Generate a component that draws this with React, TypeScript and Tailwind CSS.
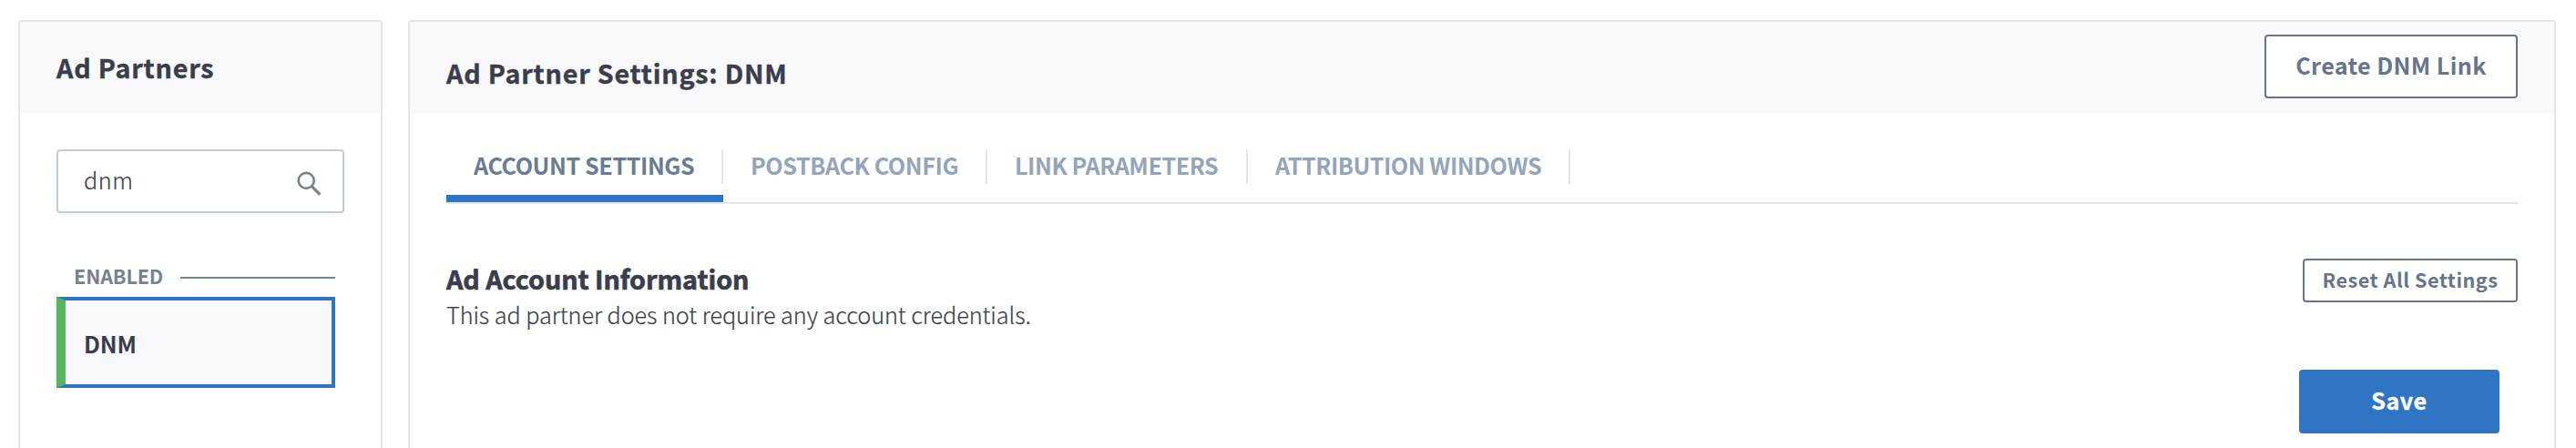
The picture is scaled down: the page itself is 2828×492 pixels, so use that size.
import type { ReactNode } from "react";

const tabs = [
  { label: "ACCOUNT SETTINGS", width: "w-[304px]", tracking: "tracking-[-0.4px]", active: true },
  { label: "POSTBACK CONFIG", width: "w-[290px]", tracking: "tracking-[-0.4px]", active: false },
  { label: "LINK PARAMETERS", width: "w-[286px]", tracking: "tracking-[-0.42px]", active: false },
  { label: "ATTRIBUTION WINDOWS", width: "w-[354px]", tracking: "tracking-[-0.46px]", active: false },
];

function Panel({ className, children }: { className: string; children: ReactNode }) {
  return (
    <section className={`flex flex-col rounded-t-[4px] border-2 border-b-0 border-[#e1e6ea] ${className}`}>
      {children}
    </section>
  );
}

function SearchIcon() {
  return (
    <svg width="28" height="28" viewBox="0 0 28 28" fill="none" stroke="#76828f" className="mt-1.5 shrink-0">
      <circle cx="10.2" cy="10.4" r="8.5" strokeWidth="2.6" />
      <path d="M16.2 16.6 L25.4 25.6" strokeWidth="3.2" />
    </svg>
  );
}

function PartnerList() {
  return (
    <Panel className="w-[400px] shrink-0">
      <header className="h-[100px] bg-[#f9f9fb] pl-10 pt-[29px]">
        <h2 className="text-[28.7px] font-bold leading-[41px] tracking-[0.8px] text-[#3b3e4a] [-webkit-text-stroke:0.4px]">
          Ad Partners
        </h2>
      </header>
      <div className="pl-10 pt-10">
        <div className="flex h-[70px] w-[316px] items-center justify-between rounded-[4px] border-2 border-[#c2cdd8] pl-7 pr-[22px]">
          <span className="-mt-1 text-[25.15px] font-light leading-9 tracking-[0.6px] text-[#3b3e4a] [-webkit-text-stroke:0.2px]">
            dnm
          </span>
          <SearchIcon />
        </div>
        <div className="mt-[55px] flex h-8 w-[306px] items-center pl-[19px]">
          <span className="-mt-[5px] w-[117px] text-[21.6px] font-bold leading-[31px] tracking-[-0.15px] text-[#76828f]">
            ENABLED
          </span>
          <span className="h-0.5 flex-1 bg-[#76828f]" />
        </div>
        <div className="mt-[5px] flex h-[100px] w-[306px] items-center border-4 border-l-[10px] border-[#3074c4] border-l-[#59b660] bg-[#f7f9fd] pl-5">
          <span className="mt-0.5 text-[25.15px] font-bold leading-9 tracking-[-0.2px] text-[#3b3e4a]">DNM</span>
        </div>
      </div>
    </Panel>
  );
}

function Tabs() {
  return (
    <nav className="flex h-[60px] border-b-2 border-[#e1e6ea]">
      {tabs.map((tab) => (
        <div
          key={tab.label}
          className={`${tab.width} ${tab.active ? "border-b-8 border-[#3074c4] text-[#697c91]" : "text-[#94a5b9]"}`}
        >
          <div className="flex h-[38px] items-center border-r-2 border-[#e1e6ea] pl-[30px]">
            <span className={`-mt-1 whitespace-nowrap text-[25.15px] font-bold leading-9 ${tab.tracking}`}>
              {tab.label}
            </span>
          </div>
        </div>
      ))}
    </nav>
  );
}

function Settings() {
  return (
    <Panel className="flex-1">
      <header className="flex h-[100px] items-start justify-between bg-[#f9f9fb] px-10 pt-[14px]">
        <h1 className="mt-[21px] text-[28.7px] font-bold leading-[41px] tracking-[0.8px] text-[#3b3e4a] [-webkit-text-stroke:0.4px]">
          Ad Partner Settings: DNM
        </h1>
        <button className="h-[70px] w-[278px] rounded-[4px] border-2 border-[#66758a] bg-white pb-1 text-[25.15px] font-bold leading-9 tracking-[0.4px] text-[#66758a]">
          Create DNM Link
        </button>
      </header>
      <div className="px-10 pt-10">
        <Tabs />
        <div className="mt-[60px] flex items-start justify-between">
          <div>
            <h3 className="pt-px text-[28.7px] font-bold leading-[41px] tracking-[-0.04px] text-[#3b3e4a] [-webkit-text-stroke:0.7px]">
              Ad Account Information
            </h3>
            <p className="text-[25.15px] font-light leading-[38px] tracking-[-0.02px] text-[#3b3e4a] [-webkit-text-stroke:0.2px]">
              This ad partner does not require any account credentials.
            </p>
          </div>
          <button className="h-12 w-[236px] rounded-[4px] border-2 border-[#66758a] bg-white pb-[3px] text-[21.6px] font-bold leading-[31px] tracking-[0.5px] text-[#66758a]">
            Reset All Settings
          </button>
        </div>
        <div className="flex justify-end pr-5 pt-[42px]">
          <button className="h-[70px] w-[220px] rounded-[4px] bg-[#3074c4] pb-1 text-[25.15px] font-bold leading-9 tracking-[0.5px] text-white [-webkit-text-stroke:0.3px]">
            Save
          </button>
        </div>
      </div>
    </Panel>
  );
}

export default function App() {
  return (
    <main className="flex h-[492px] gap-7 overflow-hidden bg-white pl-5 pr-[22px] pt-[22px] font-['Noto_Sans_CJK_SC',sans-serif]">
      <PartnerList />
      <Settings />
    </main>
  );
}
